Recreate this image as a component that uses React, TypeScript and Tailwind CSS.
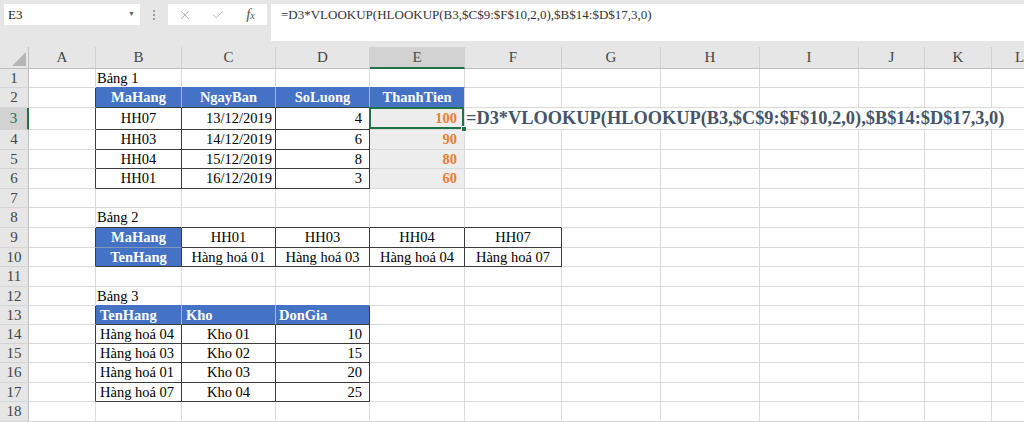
import React from 'react';
import { X, Check } from 'lucide-react';

type Cell = { t?: string; a?: 'l' | 'c' | 'r'; k?: 'hdr' | 'org' | 'fx' | 'gray'; pad?: string };

const GRID = 'grid grid-cols-[29px_67px_86px_94px_94px_95px_97px_99px_99px_99px_66px_67px_56px]';
const COLS = ['A', 'B', 'C', 'D', 'E', 'F', 'G', 'H', 'I', 'J', 'K', 'L'];
const HEIGHTS = [19, 20, 22, 20, 19, 20, 19, 20, 20, 19, 20, 19, 19, 19, 19, 20, 19, 20];
const HCLS: Record<number, string> = { 19: 'h-[19px]', 20: 'h-[20px]', 22: 'h-[22px]' };

const FORMULA = '=D3*VLOOKUP(HLOOKUP(B3,$C$9:$F$10,2,0),$B$14:$D$17,3,0)';

const D: Record<string, Cell> = {
  B1: { t: 'Bảng 1', a: 'l', pad: 'pl-[1px]' },
  B2: { t: 'MaHang', a: 'c', k: 'hdr' },
  C2: { t: 'NgayBan', a: 'c', k: 'hdr' },
  D2: { t: 'SoLuong', a: 'c', k: 'hdr' },
  E2: { t: 'ThanhTien', a: 'c', k: 'hdr' },
  B3: { t: 'HH07', a: 'c' },
  C3: { t: '13/12/2019', a: 'r', pad: 'pr-[3px]' },
  D3: { t: '4', a: 'r' },
  E3: { t: '100', a: 'r', k: 'org' },
  F3: { t: FORMULA, a: 'l', k: 'fx' },
  B4: { t: 'HH03', a: 'c' },
  C4: { t: '14/12/2019', a: 'r', pad: 'pr-[3px]' },
  D4: { t: '6', a: 'r' },
  E4: { t: '90', a: 'r', k: 'org' },
  B5: { t: 'HH04', a: 'c' },
  C5: { t: '15/12/2019', a: 'r', pad: 'pr-[3px]' },
  D5: { t: '8', a: 'r' },
  E5: { t: '80', a: 'r', k: 'org' },
  B6: { t: 'HH01', a: 'c' },
  C6: { t: '16/12/2019', a: 'r', pad: 'pr-[3px]' },
  D6: { t: '3', a: 'r' },
  E6: { t: '60', a: 'r', k: 'org' },
  B8: { t: 'Bảng 2', a: 'l', pad: 'pl-[1px]' },
  B9: { t: 'MaHang', a: 'c', k: 'hdr' },
  C9: { t: 'HH01', a: 'c' },
  D9: { t: 'HH03', a: 'c' },
  E9: { t: 'HH04', a: 'c' },
  F9: { t: 'HH07', a: 'c' },
  B10: { t: 'TenHang', a: 'c', k: 'hdr' },
  C10: { t: 'Hàng hoá 01', a: 'c' },
  D10: { t: 'Hàng hoá 03', a: 'c' },
  E10: { t: 'Hàng hoá 04', a: 'c' },
  F10: { t: 'Hàng hoá 07', a: 'c' },
  B12: { t: 'Bảng 3', a: 'l', pad: 'pl-[1px]' },
  B13: { t: 'TenHang', a: 'l', k: 'hdr', pad: 'pl-[4px]' },
  C13: { t: 'Kho', a: 'l', k: 'hdr', pad: 'pl-[4px]' },
  D13: { t: 'DonGia', a: 'l', k: 'hdr', pad: 'pl-[3px]' },
  B14: { t: 'Hàng hoá 04', a: 'l', pad: 'pl-[4px]' },
  C14: { t: 'Kho 01', a: 'c' },
  D14: { t: '10', a: 'r' },
  B15: { t: 'Hàng hoá 03', a: 'l', pad: 'pl-[4px]' },
  C15: { t: 'Kho 02', a: 'c' },
  D15: { t: '15', a: 'r' },
  B16: { t: 'Hàng hoá 01', a: 'l', pad: 'pl-[4px]' },
  C16: { t: 'Kho 03', a: 'c' },
  D16: { t: '20', a: 'r' },
  B17: { t: 'Hàng hoá 07', a: 'l', pad: 'pl-[4px]' },
  C17: { t: 'Kho 04', a: 'c' },
  D17: { t: '25', a: 'r' },
};

const DARK_R = 'border-r-[#3c3c3c]';
const DARK_B = 'border-b-[#3c3c3c]';
const GRID_R = 'border-r-[#dadada]';
const GRID_B = 'border-b-[#dadada]';
const SEP_R = 'border-r-[#a3b8e0]';
const BLUE_B = 'border-b-[#4472c4]';
const MID_B = 'border-b-[#8796b4]';

const inR = (v: number, a: number, b: number) => v >= a && v <= b;

function rightCls(r: number, c: number): string {
  if (r === 2 && inR(c, 2, 4)) return SEP_R;
  if (r === 13 && inR(c, 2, 3)) return SEP_R;
  if (inR(r, 2, 6) && inR(c, 1, 4)) return DARK_R;
  if (inR(r, 9, 10) && inR(c, 1, 6)) return DARK_R;
  if (inR(r, 13, 17) && inR(c, 1, 4)) return DARK_R;
  return GRID_R;
}

function bottomCls(r: number, c: number): string {
  if (r === 1 && inR(c, 2, 5)) return BLUE_B;
  if (r === 12 && inR(c, 2, 4)) return BLUE_B;
  if (inR(r, 2, 6) && inR(c, 2, 4)) return DARK_B;
  if (r === 9 && c === 2) return MID_B;
  if (inR(r, 8, 10) && inR(c, 2, 6)) return DARK_B;
  if (inR(r, 13, 17) && inR(c, 2, 4)) return DARK_B;
  return GRID_B;
}

function alignCls(cell: Cell): string {
  if (cell.pad) {
    if (cell.a === 'c') return `justify-center ${cell.pad}`;
    if (cell.a === 'r') return `justify-end ${cell.pad}`;
    return `justify-start ${cell.pad}`;
  }
  if (cell.a === 'c') return 'justify-center';
  if (cell.a === 'r') return 'justify-end pr-[7px]';
  return 'justify-start pl-[1px]';
}

function kindCls(cell: Cell | undefined, r: number, c: number): string {
  if (cell?.k === 'hdr') return 'bg-[#4472c4] text-white font-bold';
  if (cell?.k === 'org') return 'bg-[#ededed] text-[#ed7d31] font-bold';
  if (c === 5 && inR(r, 3, 6)) return 'bg-[#ededed] text-black';
  return 'text-black';
}

function Row({ r }: { r: number }) {
  const h = HEIGHTS[r - 1];
  const sel = r === 3;
  const cells: React.ReactNode[] = [];
  for (let c = 1; c <= 12; c++) {
    const key = `${COLS[c - 1]}${r}`;
    const cell = D[key];
    if (r === 3 && c === 6) {
      cells.push(
        <div
          key={key}
          className={`col-span-7 box-border border-b flex items-center whitespace-nowrap leading-none pl-[1px] text-[#44546a] font-bold text-[18.35px] ${GRID_B}`}
        >
          {cell?.t}
        </div>
      );
      break;
    }
    cells.push(
      <div
        key={key}
        className={`relative box-border border-r border-b flex items-center whitespace-nowrap leading-none text-[14.5px] ${rightCls(r, c)} ${bottomCls(r, c)} ${cell ? alignCls(cell) : ''} ${kindCls(cell, r, c)}`}
      >
        {cell?.t}
        {r === 3 && c === 5 && (
          <>
            <div className="absolute -left-px -top-px w-[calc(100%+1px)] h-[calc(100%+1px)] border-2 border-[#217346] z-10 pointer-events-none" />
            <div className="absolute -right-[3px] -bottom-[3px] w-[6px] h-[6px] bg-[#217346] border border-white z-20" />
          </>
        )}
      </div>
    );
  }
  return (
    <div className={`${GRID} ${HCLS[h]}`}>
      <div
        className={`box-border border-b flex items-center justify-center leading-none text-[15px] border-b-[#d4d4d4] ${
          sel ? 'bg-[#d2d2d2] text-[#217346] border-r-2 border-r-[#217346]' : 'bg-[#e6e6e6] text-[#444] border-r border-r-[#bfbfbf]'
        }`}
      >
        {r}
      </div>
      {cells}
    </div>
  );
}

export default function App() {
  return (
    <div className="w-[1024px] h-[422px] overflow-hidden bg-white font-['Liberation_Serif',serif]">
      {/* Top formula area */}
      <div className="h-[47px] bg-[#e6e6e6] flex items-start pt-[4px] pl-[4px]">
        <div className="w-[136px] h-[21px] bg-white flex items-center justify-between pl-[4px] pr-[5px] text-[13px] text-[#222] leading-none">
          <span>E3</span>
          <span className="text-[7px] text-[#666]">▼</span>
        </div>
        <div className="w-[28px] h-[21px] flex flex-col items-center justify-center gap-[2px]">
          <div className="w-[2px] h-[2px] bg-[#9a9a9a]" />
          <div className="w-[2px] h-[2px] bg-[#9a9a9a]" />
          <div className="w-[2px] h-[2px] bg-[#9a9a9a]" />
        </div>
        <div className="w-[99px] h-[21px] bg-white flex items-center">
          <div className="w-[33px] flex justify-center">
            <X size={14} strokeWidth={1.4} color="#a6a6a6" />
          </div>
          <div className="w-[33px] flex justify-center">
            <Check size={14} strokeWidth={1.4} color="#a6a6a6" />
          </div>
          <div className="w-[33px] flex justify-center items-baseline text-[#555] italic leading-none">
            <span className="text-[15px]">f</span>
            <span className="text-[10px]">x</span>
          </div>
        </div>
        <div className="ml-[4px] flex-1 h-[37px] bg-white pl-[10px] pt-[4px] text-[13px] text-[#333] leading-none whitespace-nowrap">
          {FORMULA}
        </div>
      </div>

      {/* Column headers */}
      <div className={`${GRID} h-[22px]`}>
        <div className="relative box-border border-r border-b border-r-[#bfbfbf] border-b-[#bfbfbf] bg-[#e6e6e6]">
          <svg className="absolute left-0 top-0" width="29" height="22" viewBox="0 0 29 22">
            <polygon points="26,5 26,19 12,19" fill="#b5b5b5" />
          </svg>
        </div>
        {COLS.map((col) => (
          <div
            key={col}
            className={`box-border border-r flex items-center justify-center leading-none text-[15px] border-r-[#d0d0d0] ${
              col === 'E'
                ? 'bg-[#d2d2d2] text-[#4b4b4b] border-b-2 border-b-[#217346]'
                : 'bg-[#e6e6e6] text-[#444] border-b border-b-[#bfbfbf]'
            }`}
          >
            {col}
          </div>
        ))}
      </div>

      {HEIGHTS.map((_, i) => (
        <Row key={i} r={i + 1} />
      ))}
    </div>
  );
}
